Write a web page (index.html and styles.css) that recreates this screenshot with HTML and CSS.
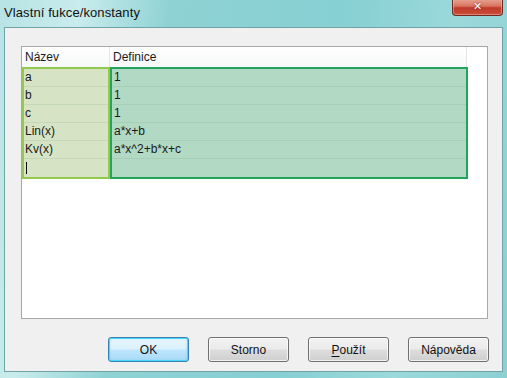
FILE: index.html
```html
<!DOCTYPE html>
<html lang="cs">
<head>
    <meta charset="UTF-8">
    <title>Vlastní fukce/konstanty</title>
    <link rel="stylesheet" href="styles.css">
</head>
<body>
    <div class="window">
        <div class="titlebar">
            <span class="title">Vlastní fukce/konstanty</span>
            <div class="close-btn">&#x2715;</div>
        </div>

        <div class="client">
            <div class="listview">
                <div class="lv-header">
                    <div class="hcell name-col">Název</div>
                    <div class="hcell def-col">Definice</div>
                    <div class="hcell rest"></div>
                </div>

                <div class="lv-body">
                    <div class="col-box name-box">
                        <div class="row">a</div>
                        <div class="row">b</div>
                        <div class="row">c</div>
                        <div class="row">Lin(x)</div>
                        <div class="row">Kv(x)</div>
                        <div class="row"><span class="caret"></span></div>
                    </div>
                    <div class="col-box def-box">
                        <div class="row">1</div>
                        <div class="row">1</div>
                        <div class="row">1</div>
                        <div class="row">a*x+b</div>
                        <div class="row">a*x^2+b*x+c</div>
                        <div class="row"></div>
                    </div>
                </div>
            </div>

            <div class="buttons">
                <button class="btn default">OK</button>
                <button class="btn">Storno</button>
                <button class="btn"><u>P</u>oužít</button>
                <button class="btn">Nápověda</button>
            </div>
        </div>
    </div>
</body>
</html>
```

FILE: styles.css
```css
* {
    box-sizing: border-box;
}

body {
    margin: 0;
    padding: 0;
    font-family: "Liberation Sans", Arial, sans-serif;
    font-size: 12px;
    color: #1a1a1a;
}

.window {
    width: 507px;
    height: 378px;
    background: linear-gradient(100deg, #b7e3e4 0%, #c9eced 14%, #8fd2d4 30%, #86cfd2 60%, #9bd9db 80%, #8ccfd2 100%);
    display: flex;
    flex-direction: column;
}

.titlebar {
    height: 27px;
    display: flex;
    justify-content: space-between;
    align-items: flex-start;
    padding-left: 4px;
    padding-right: 4px;
}

.title {
    font-size: 13px;
    color: #111;
    margin-top: 5px;
    letter-spacing: 0.1px;
}

.close-btn {
    width: 51px;
    height: 17px;
    margin-top: -1px;
    border: 1px solid #6e2a22;
    border-top: none;
    border-radius: 0 0 4px 4px;
    background: linear-gradient(#e7a593 0%, #d8735f 45%, #c0392a 55%, #c9503a 100%);
    box-shadow: inset 0 0 0 1px rgba(255, 200, 190, 0.45);
    color: #fff;
    font-family: "DejaVu Sans", sans-serif;
    font-size: 11px;
    font-weight: bold;
    text-align: center;
    line-height: 16px;
    text-shadow: 0 0 2px #7a2010;
}

.client {
    margin: 0 4px 0 4px;
    height: 345px;
    background-color: #f0f0f0;
    border: 1px solid #6fa3a6;
    display: flex;
    flex-direction: column;
}

.listview {
    margin: 18px 14px 0 16px;
    height: 273px;
    background-color: #fff;
    border: 1px solid #a8a8a8;
}

.lv-header {
    display: flex;
    height: 20px;
    background: linear-gradient(#ffffff, #f7f8f9);
}

.hcell {
    padding-left: 3px;
    line-height: 20px;
    border-right: 1px solid #e3e5e8;
}

.name-col {
    width: 88px;
}

.def-col {
    width: 357px;
}

.rest {
    flex: 1;
    border-right: none;
    background-color: #fff;
}

.lv-body {
    display: flex;
}

.col-box {
    height: 112px;
    border: 2px solid;
    display: flex;
    flex-direction: column;
}

.name-box {
    width: 88px;
    background-color: #d6e4c5;
    border-color: #94c84e;
}

.def-box {
    width: 358px;
    background-color: #b1d9c3;
    border-color: #23a45c;
}

.row {
    height: 18px;
    line-height: 17px;
    padding-left: 1px;
    border-bottom: 1px solid rgba(120, 160, 120, 0.18);
    white-space: nowrap;
}

.row:last-child {
    border-bottom: none;
}

.def-box .row {
    padding-left: 2px;
}

.caret {
    display: inline-block;
    width: 1px;
    height: 12px;
    margin-left: 1px;
    margin-top: 3px;
    background-color: #000;
    vertical-align: top;
}

.buttons {
    display: flex;
    justify-content: flex-end;
    gap: 19px;
    margin: 18px 13px 0 0;
}

.btn {
    width: 81px;
    height: 25px;
    font-family: "Liberation Sans", Arial, sans-serif;
    font-size: 12px;
    color: #111;
    border: 1px solid #707070;
    border-radius: 3px;
    background: linear-gradient(#f2f2f2 0%, #ebebeb 48%, #dddddd 52%, #cfcfcf 100%);
    box-shadow: inset 0 0 0 1px rgba(255, 255, 255, 0.7);
    padding: 0;
}

.btn.default {
    border-color: #3c7fb1;
    background: linear-gradient(#eaf6fd 0%, #d9f0fc 48%, #bee6fd 52%, #a7d9f5 100%);
    box-shadow: inset 0 0 0 1px #48d8fb, inset 0 0 3px rgba(72, 216, 251, 0.8);
}

.btn u {
    text-underline-offset: 2px;
}
```
